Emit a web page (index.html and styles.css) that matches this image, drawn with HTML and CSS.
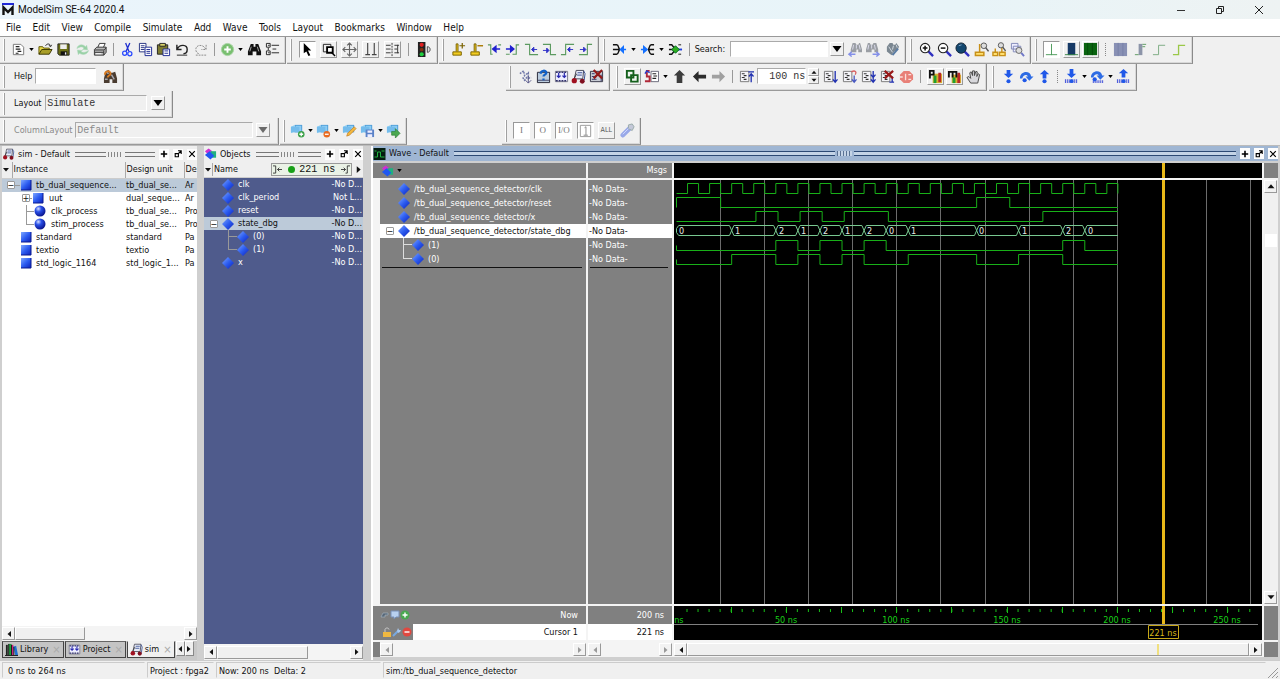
FILE: index.html
```html
<!DOCTYPE html>
<html lang="en">
<head>
<meta charset="utf-8">
<title>ModelSim SE-64 2020.4</title>
<link rel="stylesheet" href="styles.css">
</head>
<body>
<svg class="sprite" aria-hidden="true">
  <defs>
    <linearGradient id="gb" x1="0" y1="0" x2="1" y2="1"><stop offset="0" stop-color="#7fa8ff"/><stop offset=".5" stop-color="#2c5cf0"/><stop offset="1" stop-color="#0c20b8"/></linearGradient>
    <radialGradient id="gc" cx=".35" cy=".3" r=".7"><stop offset="0" stop-color="#d0dcff"/><stop offset=".4" stop-color="#2a50e8"/><stop offset="1" stop-color="#0a1590"/></radialGradient>
  </defs>
  <symbol id="caret" viewBox="0 0 6 4"><path d="M0 0h6L3 4z" fill="#000"/></symbol>
  <symbol id="new" viewBox="0 0 16 16"><path d="M2.500 2.500h8l3 3v8h-11z" fill="#fff" stroke="#777"/><path d="M5 5h4M5 7.500h5M7 10h4M5 12h3" stroke="#222" stroke-width="1.300"/></symbol>
  <symbol id="open" viewBox="0 0 16 16"><path d="M1 13V5h4l1 1.500h6V8" fill="#e6d84a" stroke="#5a5200"/><path d="M1 13l3-5h11l-3 5z" fill="#a89e28" stroke="#3a3500"/><path d="M8 4c2-3 5-2 5 0M11.500 3.500l2 1.500 1-2" fill="none" stroke="#222"/></symbol>
  <symbol id="save" viewBox="0 0 16 16"><path d="M2 2h12v12H3.500L2 12.500z" fill="#6b6f16" stroke="#222"/><path d="M4.500 2.500h7v5h-7z" fill="#eee"/><path d="M5 10h7v4H5z" fill="#111"/><path d="M9.500 11h1.500v2.500H9.500z" fill="#eee"/></symbol>
  <symbol id="refresh" viewBox="0 0 16 16"><path d="M2 7c1-5 7-5 9-2l1.500-1.500 1 5-5.500-.5 1.500-1.500C8 4.500 5 5 2 7zM14.500 9c-1 5-7.500 5-9.500 3l-1.500 1.500-1-5 5.500.5-1.500 1.500c2 1 5 .5 8-1.500z" fill="#98d0a4" stroke="#b4dcc0" stroke-width=".6"/></symbol>
  <symbol id="print" viewBox="0 0 16 16"><path d="M5 6l2-4.500h6L11 6" fill="#fff" stroke="#333"/><path d="M1.500 8L4 5.500h10V11l-2.500 3h-10z" fill="#b8b8b8" stroke="#333"/><path d="M2 8.500h10l2-2.500M2 11h9.500M11.500 9v5" stroke="#333" fill="none"/><path d="M3 12.500h6" stroke="#fff"/></symbol>
  <symbol id="cut" viewBox="0 0 16 16"><path d="M6 1l3.500 9M10.500 1L6.500 10" stroke="#2030d0" stroke-width="1.400"/><circle cx="5" cy="12" r="2.200" fill="none" stroke="#2848ff" stroke-width="1.300"/><circle cx="10.500" cy="12.500" r="2.200" fill="none" stroke="#2848ff" stroke-width="1.300"/></symbol>
  <symbol id="copy" viewBox="0 0 16 16"><path d="M1.500 1.500h7v9h-7z" fill="#fff" stroke="#223080"/><path d="M3 4h4M3 6h4M3 8h4" stroke="#223080"/><path d="M7.500 5.500h7v9h-7z" fill="#fff" stroke="#1a2690"/><path d="M9 8h4M9 10h4M9 12h4" stroke="#1a2690"/></symbol>
  <symbol id="paste" viewBox="0 0 16 16"><path d="M1.500 3h11v10h-11z" fill="#7c7a30" stroke="#222"/><path d="M4 1.500h6v3H4z" fill="#d8d26a" stroke="#222"/><path d="M7.500 7.500h7v7h-7z" fill="#fff" stroke="#1a2690"/><path d="M9 9.500h4M9 12h4" stroke="#1a2690"/></symbol>
  <symbol id="undo" viewBox="0 0 16 16"><path d="M2 3v5h5M2.500 7.500C5 2 13 2.500 13 8c0 3-2 4.500-4 4.500" fill="none" stroke="#222" stroke-width="1.500"/><path d="M2 14h11" stroke="#222"/></symbol>
  <symbol id="redo" viewBox="0 0 16 16"><path d="M14 3v5H9M13.500 7.500C11 2 3 2.500 3 8c0 3 2 4.500 4 4.500" fill="none" stroke="#888" stroke-dasharray="2 1"/><path d="M3 14h11" stroke="#888" stroke-dasharray="2 1"/></symbol>
  <symbol id="add" viewBox="0 0 16 16"><circle cx="8" cy="8" r="6.500" fill="#79bf70" stroke="#a9d4a4"/><path d="M8 4.500v7M4.500 8h7" stroke="#fff" stroke-width="2"/></symbol>
  <symbol id="bino" viewBox="0 0 16 16"><path d="M4 2h3v3h2V2h3l3 8v4h-5v-4H6v4H1v-4z" fill="#111"/><path d="M4.500 5L3 10M11 5l1.500 5" stroke="#aaa"/></symbol>
  <symbol id="tree" viewBox="0 0 16 16"><path d="M1.500 1.500h4v4h-4zM1.500 9.500h4v4h-4z" fill="#fff" stroke="#222"/><path d="M3 3.500h2M3 11.500h2M7 3.500h8M7 11.500h8M8 7.500h4M3.500 6v3" stroke="#222"/></symbol>
  <symbol id="arrow" viewBox="0 0 16 16"><path d="M4 1l8 8H8.500l2.500 5-2 1-2.200-5L4 12z" fill="#000"/></symbol>
  <symbol id="zsel" viewBox="0 0 16 16"><path d="M2.500 2.500h8v8h-8z" fill="none" stroke="#222"/><path d="M6.500 5.500h6v6h-6z" fill="#fff" stroke="#000" stroke-width="2"/><path d="M11 11l4 4" stroke="#000" stroke-width="1.500"/></symbol>
  <symbol id="pan" viewBox="0 0 16 16"><path d="M8 1v14M1 8h14M5.500 3.500L8 1l2.500 2.500M5.500 12.500L8 15l2.500-2.500M3.500 5.500L1 8l2.500 2.500M12.500 5.500L15 8l-2.500 2.500" fill="none" stroke="#666" stroke-width="1.200"/></symbol>
  <symbol id="twoc" viewBox="0 0 16 16"><path d="M5 1v12M12 1v12M2.500 13.500h5M9.500 13.500h5" stroke="#444" stroke-width="1.200"/></symbol>
  <symbol id="edit" viewBox="0 0 16 16"><path d="M1 3.500h5M1 7.500h5M1 11.500h5M10 3.500h5M10 11.500h5M13.500 3v9" stroke="#333"/><path d="M7.500 1v14" stroke="#333" stroke-dasharray="2 1"/><path d="M10 7.500h3" stroke="#333"/></symbol>
  <symbol id="traffic" viewBox="0 0 16 16"><path d="M1 0h8v16H1z" fill="#222"/><circle cx="5" cy="3" r="2.200" fill="#e02020"/><circle cx="5" cy="8" r="2" fill="#803010"/><circle cx="5" cy="13" r="2.200" fill="#20d040"/><path d="M11 5c4 0 4 6 0 6z" fill="#ddd" stroke="#444"/></symbol>
  <symbol id="curadd" viewBox="0 0 16 16"><path d="M2 10.500h9v3.500H2zM5.500 10V2h2v8" fill="#f2cc20" stroke="#7a6200"/><path d="M12 1v6M9 4h6" stroke="#7a6200" stroke-width="1.300"/></symbol>
  <symbol id="curdel" viewBox="0 0 16 16"><path d="M2 10.500h9v3.500H2zM5.500 10V2h2v8" fill="#f2cc20" stroke="#7a6200"/><path d="M9 4h6" stroke="#a87800" stroke-width="1.500"/></symbol>
  <symbol id="prev" viewBox="0 0 16 16"><path d="M1 3h3v10h2M15 3h-3" fill="none" stroke="#5c9a60" stroke-width="1.200"/><path d="M14 7.500H7M9.500 4.500L6 7.500l3.500 3z" fill="#2020d0" stroke="#2020d0" stroke-width="1.500"/></symbol>
  <symbol id="next" viewBox="0 0 16 16"><path d="M15 3h-3v10H8M1 13h4" fill="none" stroke="#5c9a60" stroke-width="1.200"/><path d="M1 7.500h7M6 4.500l3.500 3L6 10.500z" fill="#2020d0" stroke="#2020d0" stroke-width="1.500"/></symbol>
  <symbol id="fall" viewBox="0 0 16 16"><path d="M1 2.500h5v11h9" fill="none" stroke="#5c9a60" stroke-width="1.200"/><path d="M14 8H9M10.500 5.500L8 8l2.500 2.500z" fill="#3030c8" stroke="#3030c8"/></symbol>
  <symbol id="fall2" viewBox="0 0 16 16"><path d="M1 2.500h8v11h6" fill="none" stroke="#5c9a60" stroke-width="1.200"/><path d="M1 9h5M5 6.500L7.500 9 5 11.500z" fill="#3030c8" stroke="#3030c8"/></symbol>
  <symbol id="rise" viewBox="0 0 16 16"><path d="M1 13.500h5v-11h9" fill="none" stroke="#5c9a60" stroke-width="1.200"/><path d="M14 8H9M10.500 5.500L8 8l2.500 2.500z" fill="#3030c8" stroke="#3030c8"/></symbol>
  <symbol id="rise2" viewBox="0 0 16 16"><path d="M1 13.500h9v-11h5" fill="none" stroke="#5c9a60" stroke-width="1.200"/><path d="M2 8h5M6 5.500L8.500 8 6 10.500z" fill="#3030c8" stroke="#3030c8"/></symbol>
  <symbol id="merge" viewBox="0 0 16 16"><path d="M1 3h4c2 0 2 3.500 3 5-1 1.500-1 5-3 5H1M1 8h7" fill="none" stroke="#111" stroke-width="1.600"/><path d="M15 8h-4M12 5L9 8l3 3z" fill="#1470ff" stroke="#1470ff" stroke-width="1.600"/></symbol>
  <symbol id="split" viewBox="0 0 16 16"><path d="M15 3h-3c-2 0-2 3.500-3 5 1 1.500 1 5 3 5h3M15 8H9" fill="none" stroke="#111" stroke-width="1.600"/><path d="M1 8h3M4 5l3.500 3L4 11z" fill="#1470ff" stroke="#1470ff" stroke-width="1.600"/></symbol>
  <symbol id="node" viewBox="0 0 16 16"><path d="M1 3h3l4 5-4 5H1M1 8h6" fill="none" stroke="#111" stroke-width="1.500"/><path d="M9 8h6" stroke="#2040e0" stroke-width="2"/><path d="M8 4l4 4-4 4-4-4z" fill="#30b020" stroke="#062"/><path d="M11 3h3M11 13h3" stroke="#111"/></symbol>
  <symbol id="fprev" viewBox="0 0 16 16"><path d="M6 1h3l1 2h2l1-2h1l2 7v3h-4V8h-2v3H4V8z" fill="#9a9ea4"/><path d="M7 3L6 8M13 3l1 5M10 3v4" stroke="#dde"/><path d="M9 13H2M5 10.500L2 13l3 2.500" fill="none" stroke="#8490e8" stroke-width="1.500"/></symbol>
  <symbol id="fnext" viewBox="0 0 16 16"><path d="M2 1h2l1 2h2l1-2h3l2 7v3H9V8H6v3H0V8z" fill="#9a9ea4"/><path d="M3 3L2 8M9 3l1 5M6 3v4" stroke="#dde"/><path d="M7 13h7M11 10.500l3 2.500-3 2.500" fill="none" stroke="#8490e8" stroke-width="1.500"/></symbol>
  <symbol id="fopt" viewBox="0 0 16 16"><path d="M2 5l3-4h3l1 2h2l1-2 3 4-2 4-3 1-3 4-5-4z" fill="#7b8791"/><path d="M4 5l4 6M9 4l-1 4M12 3l1 3" stroke="#d4dce4"/><path d="M8 14l6-7" stroke="#5a7ca4" stroke-width="2"/></symbol>
  <symbol id="zin" viewBox="0 0 16 16"><path d="M10 10l5 5" stroke="#3030c0" stroke-width="2.500"/><circle cx="6.500" cy="6.500" r="5" fill="#fff" stroke="#222" stroke-width="1.200"/><path d="M6.500 4v5M4 6.500h5" stroke="#111" stroke-width="1.600"/></symbol>
  <symbol id="zout" viewBox="0 0 16 16"><path d="M10 10l5 5" stroke="#3030c0" stroke-width="2.500"/><circle cx="6.500" cy="6.500" r="5" fill="#fff" stroke="#222" stroke-width="1.200"/><path d="M4 6.500h5" stroke="#111" stroke-width="1.600"/></symbol>
  <symbol id="zfull" viewBox="0 0 16 16"><path d="M10 10l5 5" stroke="#3030c0" stroke-width="2.500"/><circle cx="6.500" cy="6.500" r="5.500" fill="#12466e" stroke="#123"/><path d="M4 4l3-1" stroke="#8ac"/></symbol>
  <symbol id="zcur" viewBox="0 0 16 16"><path d="M1.500 11h9v3.500h-9zM6 10.500V2" fill="#ffe070" stroke="#c89018" stroke-width="1.600"/><circle cx="10.500" cy="4" r="3" fill="#ddd" stroke="#555"/><path d="M12.500 6l3 4" stroke="#555" stroke-width="1.500"/></symbol>
  <symbol id="zcur2" viewBox="0 0 16 16"><path d="M1 11h5v3.500H1zM8 11h6v3.500H8zM3.500 10.500V7M10.500 10.500V5" fill="#ffe070" stroke="#c89018" stroke-width="1.500"/><circle cx="9.500" cy="3.500" r="2.800" fill="#ddd" stroke="#555"/><path d="M11.500 5.500l3 4" stroke="#555" stroke-width="1.500"/></symbol>
  <symbol id="zoth" viewBox="0 0 16 16"><path d="M1.500 1.500h7v6h-7zM3.500 4.500h8v6h-8z" fill="#eef" stroke="#8088b8"/><circle cx="9.500" cy="9" r="3.200" fill="#ddd" stroke="#666"/><path d="M12 11.500l3 3.500" stroke="#7078c8" stroke-width="2"/></symbol>
  <symbol id="w1" viewBox="0 0 16 16"><path d="M8 2v12M2 13.500h12" stroke="#4a9a58"/></symbol>
  <symbol id="w2" viewBox="0 0 16 16"><path d="M4 1h8v13H4z" fill="#173a66"/><path d="M1 13.500h14" stroke="#3a8a48"/></symbol>
  <symbol id="w3" viewBox="0 0 16 16"><path d="M1 1h14v13H1z" fill="#0a6410"/><path d="M5 1v13M10 1v13" stroke="#064c0c"/></symbol>
  <symbol id="w4" viewBox="0 0 16 16"><path d="M1 1h14v14H1z" fill="#8890b4"/><path d="M5.500 1v14M10.500 1v14" stroke="#7880a8"/></symbol>
  <symbol id="w5" viewBox="0 0 16 16"><path d="M6 2h4v12H6z" fill="#8c94a8"/><path d="M2 13.500h4M10 2.500h4M10 5h3" stroke="#5c9a60"/></symbol>
  <symbol id="w6" viewBox="0 0 16 16"><path d="M1 13.500h6v-10h7" fill="none" stroke="#7aaa80"/></symbol>
  <symbol id="w7" viewBox="0 0 16 16"><path d="M1 13.500h6v-10h7" fill="none" stroke="#9ac848" stroke-width="1.400"/></symbol>
  <symbol id="hfind" viewBox="0 0 16 16"><path d="M3 2l3-1 2 3h2l3-1 2 7v5h-5v-4H7v4H1v-5z" fill="#4a3c30"/><path d="M3 3l3 2M9 6l3 5M2 11h3" stroke="#a8a8b0" stroke-width="1.500"/><path d="M2 6c0-4 6-5 6-1 0 2-3 2-3 4" fill="none" stroke="#d87a20" stroke-width="2"/></symbol>
  <symbol id="comp" viewBox="0 0 16 16"><path d="M2 5l4-3 1 5 4-3v6l3-1M5 9l2 3 3-4" fill="none" stroke="#7078a8" stroke-width="1.600" stroke-dasharray="2 1"/><path d="M11 7v8M8 12l3 3 3-3" fill="none" stroke="#558"/></symbol>
  <symbol id="qbook" viewBox="0 0 16 16"><path d="M1.500 3.500h13v11h-13z" fill="#bcd" stroke="#223"/><path d="M2 12h12" stroke="#446"/><path d="M5 5c0-4 6-4 6-1 0 2-3 2-3 4M8 10v2" fill="none" stroke="#1060c8" stroke-width="2.400"/></symbol>
  <symbol id="abook" viewBox="0 0 16 16"><path d="M1.500 2.500h13v11h-13z" fill="#eef" stroke="#778"/><path d="M2 3.500h12M2 12.500h12" stroke="#30306a" stroke-width="1.500" stroke-dasharray="2 1"/><path d="M5 4v5M11 4v5M3 7l2 2 2-2M9 7l2 2 2-2" fill="none" stroke="#2828b0" stroke-width="1.300"/></symbol>
  <symbol id="sim" viewBox="0 0 16 16"><path d="M5.500 1.500h8l-1 9h-9z" fill="#e8ecf8" stroke="#445"/><path d="M7 4h5M6.500 6.500h5M13.500 2l1.500 3-1 7" fill="none" stroke="#334a90"/><path d="M3 11L6 5" stroke="#333"/><circle cx="3.500" cy="12.500" r="2.800" fill="#a01020"/><circle cx="12" cy="13" r="2.600" fill="#801020"/></symbol>
  <symbol id="xbook" viewBox="0 0 16 16"><path d="M1.500 2.500h13v11h-13z" fill="#c8ccd4" stroke="#334"/><path d="M3 5h3M3 8h3M3 11h5M13 6v7" stroke="#336"/><path d="M5 1l9 9M14 1l-9 9" stroke="#901818" stroke-width="2.300"/></symbol>
  <symbol id="env" viewBox="0 0 16 16"><path d="M2 2h7v7H2zM6.500 6.500h7v7h-7z" fill="#eef8ee" fill-opacity=".6" stroke="#14601c" stroke-width="2"/></symbol>
  <symbol id="restart" viewBox="0 0 16 16"><path d="M7.500 2.500h8v11h-8z" fill="#fff" stroke="#667"/><path d="M9 5h4M10 7.500h4M9 10h4" stroke="#222" stroke-width="1.200"/><path d="M6 2H3v6h3v5H1" fill="none" stroke="#b02838" stroke-width="2"/><path d="M1 5l2-3 3 2" fill="none" stroke="#2838c8" stroke-width="1.500"/></symbol>
  <symbol id="up" viewBox="0 0 16 16"><path d="M8 1l6 6h-3v8H5V7H2z" fill="#3c3c3c"/></symbol>
  <symbol id="left" viewBox="0 0 16 16"><path d="M1 8l6-6v4h8v4H7v4z" fill="#2c2c2c"/></symbol>
  <symbol id="right" viewBox="0 0 16 16"><path d="M15 8L9 2v4H1v4h8v4z" fill="#a0a0a0"/></symbol>
  <symbol id="doc" viewBox="0 0 16 16"><path d="M1.500 2.500h9v11h-9z" fill="#f4f4f8" stroke="#777"/><path d="M3 5h3M5 7h3M3 9h3M5 11h3" stroke="#333" stroke-width="1.200"/></symbol>
  <symbol id="runup" viewBox="0 0 16 16"><use href="#doc"/><path d="M10 3h6M13 14V5M10.500 8L13 5l2.500 3" fill="none" stroke="#2030b0" stroke-width="1.400"/></symbol>
  <symbol id="run" viewBox="0 0 16 16"><use href="#doc"/><path d="M13 2v12M10.500 11l2.500 3 2.500-3" fill="none" stroke="#2030b0" stroke-width="1.400"/></symbol>
  <symbol id="runc" viewBox="0 0 16 16"><use href="#doc"/><path d="M13 7v7M10.500 11l2.500 3 2.500-3" fill="none" stroke="#4858c0" stroke-width="1.400"/><path d="M10 3c4-2 6 0 4 3" fill="none" stroke="#d86060" stroke-width="1.400"/></symbol>
  <symbol id="runa" viewBox="0 0 16 16"><use href="#doc"/><path d="M13 2v12M10.500 6l2.500 3 2.500-3M10.500 11l2.500 3 2.500-3" fill="none" stroke="#2030b0" stroke-width="1.400"/></symbol>
  <symbol id="brk" viewBox="0 0 16 16"><use href="#doc"/><path d="M13 8v6M10 14h5" stroke="#2030b0" stroke-width="1.400"/><path d="M5 2l9 8M14 2l-9 8" stroke="#981818" stroke-width="2.400"/></symbol>
  <symbol id="stop" viewBox="0 0 16 16"><path d="M5 2h6l4 4v5l-4 4H5l-4-4V6z" fill="#e88078"/><path d="M1 8.500h3M7 5v7M10 6h3M10 11h3" stroke="#fbe0dc" stroke-width="1.400"/></symbol>
  <symbol id="prof" viewBox="0 0 16 16"><path d="M5 5h10v10H5z" fill="#d8b030"/><path d="M6 7h3v8H6z" fill="#20a030"/><path d="M11 4h3v10h-3z" fill="#b82828"/><path d="M2 10V2h4v4H2" fill="none" stroke="#111" stroke-width="2"/></symbol>
  <symbol id="mem" viewBox="0 0 16 16"><path d="M5 6h10v9H5z" fill="#d8b030"/><path d="M6 9h3v6H6z" fill="#20a030"/><path d="M11 4h3v11h-3z" fill="#b82828"/><path d="M2 9V3h8v6M6 3v6" fill="none" stroke="#111" stroke-width="2"/></symbol>
  <symbol id="hand" viewBox="0 0 16 16"><path d="M5 15L1 9l2-1 2 2L4 4l1.500-1L7 7V2h2v5l1.500-4.500L12 3l-.5 5L13 5l1.500 1-2 9z" fill="#d8d8dc" stroke="#444"/></symbol>
  <symbol id="sinto" viewBox="0 0 16 16"><path d="M6 1h4v4h3L8 9.500 3 5h3z" fill="#2058e8"/><circle cx="8" cy="13" r="2.200" fill="#2058e8"/></symbol>
  <symbol id="sover" viewBox="0 0 16 16"><path d="M1 10c0-8 11-9 12-2h2.500L11 12.500 7 8h2.500C8 5.500 5 6 3.500 10z" fill="#2e6ce4"/><circle cx="6" cy="12" r="2.200" fill="#2058e8"/></symbol>
  <symbol id="sout" viewBox="0 0 16 16"><path d="M8 1l5 4.500h-3V10H6V5.500H3z" fill="#2058e8"/><circle cx="8" cy="13" r="2.200" fill="#2058e8"/></symbol>
  <symbol id="sinto2" viewBox="0 0 16 16"><path d="M6 0h4v5h3L8 9.500 3 5h3z" fill="#2058e8"/><path d="M1 13h14" stroke="#3848d8" stroke-width="4" stroke-dasharray="1 1"/><circle cx="8" cy="13" r="2" fill="#2058e8"/></symbol>
  <symbol id="sover2" viewBox="0 0 16 16"><path d="M1 9c0-8 11-9 12-2h2.500L11 11.500 7 7h2.500C8 4.500 5 5 3.500 9z" fill="#2e6ce4"/><path d="M3 13.500h12" stroke="#3848d8" stroke-width="3" stroke-dasharray="1 1"/><circle cx="5" cy="11" r="2.200" fill="#2058e8"/></symbol>
  <symbol id="sout2" viewBox="0 0 16 16"><path d="M8 0l5 4.500h-3V9H6V4.500H3z" fill="#2058e8"/><path d="M1 13h14" stroke="#3848d8" stroke-width="4" stroke-dasharray="1 1"/><circle cx="8" cy="13" r="2" fill="#2058e8"/></symbol>
  <symbol id="tag" viewBox="0 0 16 16"><path d="M5 2h8v8H5z" fill="#4f9cd8"/><path d="M1 4l4-2v7l-4 2zM6 3h6v6H6z" fill="#8ccdf4"/><path d="M1 4h9v6H1z" fill="#74bcec"/></symbol>
  <symbol id="tagadd" viewBox="0 0 16 16"><use href="#tag"/><circle cx="12" cy="12" r="3.500" fill="#3aa048"/><path d="M12 10v4M10 12h4" stroke="#fff" stroke-width="1.400"/></symbol>
  <symbol id="tagdel" viewBox="0 0 16 16"><use href="#tag"/><circle cx="11.500" cy="12" r="3.500" fill="#e86a20"/><path d="M9.500 12h4" stroke="#fff" stroke-width="1.400"/></symbol>
  <symbol id="tagedit" viewBox="0 0 16 16"><use href="#tag"/><path d="M5 14l1-3 7-7 2 2-7 7z" fill="#f2b840" stroke="#c07a20" stroke-width=".7"/></symbol>
  <symbol id="tagsave" viewBox="0 0 16 16"><use href="#tag"/><path d="M6 7h9v8H6z" fill="#5a82c8"/><path d="M8 8h5v2.500H8zM8 12h5v3H8z" fill="#eef"/></symbol>
  <symbol id="taggo" viewBox="0 0 16 16"><use href="#tag"/><path d="M6 9h4V6l5 5-5 5v-3H6z" fill="#4aa850" stroke="#2a7a34" stroke-width=".7"/></symbol>
  <symbol id="fbox" viewBox="0 0 16 16"><path d="M2.500 2.500h11v12h-11z" fill="none" stroke="#999"/><path d="M7 5l1.500-1v9M6 13h4.500" fill="none" stroke="#888"/></symbol>
  <symbol id="wrench" viewBox="0 0 16 16"><path d="M3 13l8-8" stroke="#98a8e8" stroke-width="5" stroke-linecap="round"/><path d="M9 2l4-1 2 3-2 4-4-2z" fill="#c4c8d8" stroke="#9aa"/><path d="M3 12l6-6" stroke="#d4dcff"/></symbol>
  <symbol id="sq" viewBox="0 0 12 12"><path d="M1 1h10v10H1z" fill="url(#gb)"/><path d="M11 1v10H1" fill="none" stroke="#0a1a90"/></symbol>
  <symbol id="ball" viewBox="0 0 12 12"><circle cx="6" cy="6" r="5.500" fill="url(#gc)"/></symbol>
  <symbol id="dia" viewBox="0 0 12 12"><path d="M6 0l6 6-6 6-6-6z" fill="url(#gb)"/></symbol>
  <symbol id="objs" viewBox="0 0 14 12"><path d="M5 0l4 3-4 4-4-4z" fill="#d030d0"/><path d="M7 3h6v7H7z" fill="#20b080"/><path d="M6 3l5 5-4 4-6-5z" fill="#2058f0"/></symbol>
  <symbol id="wav" viewBox="0 0 12 12"><path d="M0 0h12v12H0z" fill="#041c10"/><path d="M1 9h3V4h3v5h4M1 3h2M8 3h3" fill="none" stroke="#20b040"/></symbol>
  <symbol id="lib" viewBox="0 0 14 14"><path d="M1 2h2v11H1z" fill="#222"/><path d="M4 1h3v12H4z" fill="#20a040"/><path d="M7 2h2v11H7z" fill="#d02080"/><path d="M9 4l3-1 2 10h-3z" fill="#2070d0"/><path d="M0 13.500h14M4 1v12M7 2v11M9.500 4v9" stroke="#111"/></symbol>
  <symbol id="float" viewBox="0 0 10 10"><path d="M1.500 4.500h4v4h-4z" fill="none" stroke="#000" stroke-width="1.400"/><path d="M5 1h4v4M8.500 1.500L5 5" fill="none" stroke="#000" stroke-width="1.400"/></symbol>
  <symbol id="plus" viewBox="0 0 10 10"><path d="M5 1v8M1 5h8" stroke="#000" stroke-width="2"/></symbol>
  <symbol id="close" viewBox="0 0 10 10"><path d="M1.500 1.500l7 7M8.500 1.500l-7 7" stroke="#000" stroke-width="1.500"/></symbol>
  <symbol id="al" viewBox="0 0 6 8"><path d="M5 1v6L1.500 4z" fill="currentColor"/></symbol>
  <symbol id="ar" viewBox="0 0 6 8"><path d="M1 1v6l3.500-3z" fill="currentColor"/></symbol>
  <symbol id="au" viewBox="0 0 8 6"><path d="M1 4.500h6L4 1z" fill="currentColor"/></symbol>
  <symbol id="ad" viewBox="0 0 8 6"><path d="M1 1h6L4 4.500z" fill="currentColor"/></symbol>
</svg>

<header class="titlebar">
  <svg class="logo" viewBox="0 0 12 13"><path d="M0 0h12v2H0z" fill="#2028d8"/><path d="M1.500 12V4.500L6 9l4.500-4.500V12" fill="none" stroke="#111" stroke-width="2.400"/></svg>
  <h1>ModelSim SE-64 2020.4</h1>
  <button class="win" aria-label="Minimize"><svg viewBox="0 0 10 10"><path d="M1 5.500h8" stroke="#333"/></svg></button>
  <button class="win" aria-label="Restore"><svg viewBox="0 0 10 10"><path d="M1.500 3.500h5v5h-5zM3.500 3V1.500h5v5H7" fill="none" stroke="#222"/></svg></button>
  <button class="win" aria-label="Close"><svg viewBox="0 0 10 10"><path d="M1 1l8 8M9 1L1 9" stroke="#222"/></svg></button>
</header>
<nav class="menu">
  <button>File</button><button>Edit</button><button>View</button><button>Compile</button><button>Simulate</button><button>Add</button><button>Wave</button><button>Tools</button><button>Layout</button><button>Bookmarks</button><button>Window</button><button>Help</button>
</nav>

<section class="bars">
  <div class="bar">
    <div class="grp g-file">
      <button class="b" aria-label="New"><svg><use href="#new"/></svg></button><button class="c" aria-label="New menu"><svg><use href="#caret"/></svg></button>
      <button class="b" aria-label="Open"><svg><use href="#open"/></svg></button>
      <button class="b" aria-label="Save"><svg><use href="#save"/></svg></button>
      <button class="b" aria-label="Reload"><svg><use href="#refresh"/></svg></button>
      <button class="b" aria-label="Print"><svg><use href="#print"/></svg></button><i class="sep"></i>
      <button class="b" aria-label="Cut"><svg><use href="#cut"/></svg></button>
      <button class="b" aria-label="Copy"><svg><use href="#copy"/></svg></button>
      <button class="b" aria-label="Paste"><svg><use href="#paste"/></svg></button>
      <button class="b" aria-label="Undo"><svg><use href="#undo"/></svg></button>
      <button class="b" aria-label="Redo"><svg><use href="#redo"/></svg></button><i class="sep"></i>
      <button class="b" aria-label="Add"><svg><use href="#add"/></svg></button><button class="c" aria-label="Add menu"><svg><use href="#caret"/></svg></button>
      <button class="b" aria-label="Find"><svg><use href="#bino"/></svg></button>
      <button class="b" aria-label="Collapse"><svg><use href="#tree"/></svg></button>
    </div>
    <div class="grp g-mode">
      <button class="b on" aria-label="Select mode"><svg><use href="#arrow"/></svg></button>
      <button class="b up" aria-label="Zoom mode"><svg><use href="#zsel"/></svg></button>
      <button class="b up" aria-label="Pan mode"><svg><use href="#pan"/></svg></button>
      <button class="b up" aria-label="Two cursor mode"><svg><use href="#twoc"/></svg></button>
      <button class="b up" aria-label="Edit mode"><svg><use href="#edit"/></svg></button><i class="sep"></i>
      <button class="b" aria-label="Stop drawing"><svg><use href="#traffic"/></svg></button>
    </div>
    <div class="grp g-cursor">
      <button class="b" aria-label="Insert cursor"><svg><use href="#curadd"/></svg></button>
      <button class="b" aria-label="Delete cursor"><svg><use href="#curdel"/></svg></button>
      <button class="b" aria-label="Previous transition"><svg><use href="#prev"/></svg></button>
      <button class="b" aria-label="Next transition"><svg><use href="#next"/></svg></button>
      <button class="b" aria-label="Previous falling edge"><svg><use href="#fall"/></svg></button>
      <button class="b" aria-label="Next falling edge"><svg><use href="#fall2"/></svg></button>
      <button class="b" aria-label="Previous rising edge"><svg><use href="#rise"/></svg></button>
      <button class="b" aria-label="Next rising edge"><svg><use href="#rise2"/></svg></button>
    </div>
    <div class="grp g-search">
      <button class="b" aria-label="Drivers"><svg><use href="#merge"/></svg></button><button class="c" aria-label="Drivers menu"><svg><use href="#caret"/></svg></button>
      <button class="b" aria-label="Readers"><svg><use href="#split"/></svg></button><button class="c" aria-label="Readers menu"><svg><use href="#caret"/></svg></button>
      <button class="b" aria-label="Net"><svg><use href="#node"/></svg></button><i class="sep"></i>
      <label for="search">Search:</label><input id="search" class="field" type="text"><button class="drop" aria-label="Search history"><svg><use href="#caret"/></svg></button>
      <button class="b" aria-label="Search reverse"><svg><use href="#fprev"/></svg></button>
      <button class="b" aria-label="Search forward"><svg><use href="#fnext"/></svg></button>
      <button class="b" aria-label="Search options"><svg><use href="#fopt"/></svg></button>
    </div>
    <div class="grp g-zoom">
      <button class="b" aria-label="Zoom in"><svg><use href="#zin"/></svg></button>
      <button class="b" aria-label="Zoom out"><svg><use href="#zout"/></svg></button>
      <button class="b" aria-label="Zoom full"><svg><use href="#zfull"/></svg></button>
      <button class="b" aria-label="Zoom on cursor"><svg><use href="#zcur"/></svg></button>
      <button class="b" aria-label="Zoom between cursors"><svg><use href="#zcur2"/></svg></button>
      <button class="b" aria-label="Zoom other window"><svg><use href="#zoth"/></svg></button>
    </div>
    <div class="grp g-expand">
      <button class="b on" aria-label="Expanded time off"><svg><use href="#w1"/></svg></button>
      <button class="b up" aria-label="Expanded time deltas"><svg><use href="#w2"/></svg></button>
      <button class="b up" aria-label="Expanded time events"><svg><use href="#w3"/></svg></button><i class="sep dot"></i>
      <button class="b" aria-label="Expand all time"><svg><use href="#w4"/></svg></button>
      <button class="b" aria-label="Expand at cursor"><svg><use href="#w5"/></svg></button>
      <button class="b" aria-label="Collapse all time"><svg><use href="#w6"/></svg></button>
      <button class="b" aria-label="Collapse at cursor"><svg><use href="#w7"/></svg></button>
    </div>
  </div>
  <div class="bar">
    <div class="grp g-help">
      <label for="help">Help</label><input id="help" class="field" type="text">
      <button class="b" aria-label="Search help"><svg><use href="#hfind"/></svg></button>
    </div>
    <div class="grp g-compile">
      <button class="b" aria-label="Compile"><svg><use href="#comp"/></svg></button>
      <button class="b" aria-label="Compile out of date"><svg><use href="#qbook"/></svg></button>
      <button class="b" aria-label="Compile all"><svg><use href="#abook"/></svg></button>
      <button class="b" aria-label="Simulate"><svg><use href="#sim"/></svg></button>
      <button class="b" aria-label="Break compile"><svg><use href="#xbook"/></svg></button>
    </div>
    <div class="grp g-run">
      <button class="b up" aria-label="Environment"><svg><use href="#env"/></svg></button>
      <button class="b" aria-label="Context"><svg><use href="#restart"/></svg></button><button class="c" aria-label="Context menu"><svg><use href="#caret"/></svg></button>
      <button class="b" aria-label="Up"><svg><use href="#up"/></svg></button>
      <button class="b" aria-label="Back"><svg><use href="#left"/></svg></button>
      <button class="b" aria-label="Forward"><svg><use href="#right"/></svg></button><i class="sep"></i>
      <button class="b" aria-label="Restart"><svg><use href="#runup"/></svg></button>
      <input class="field num" type="text" value="100 ns" aria-label="Run length"><span class="spin"><button aria-label="Increase"><svg><use href="#au"/></svg></button><button aria-label="Decrease"><svg><use href="#ad"/></svg></button></span>
      <button class="b" aria-label="Run"><svg><use href="#run"/></svg></button>
      <button class="b" aria-label="Continue"><svg><use href="#runc"/></svg></button>
      <button class="b" aria-label="Run all"><svg><use href="#runa"/></svg></button>
      <button class="b" aria-label="Break"><svg><use href="#brk"/></svg></button>
      <button class="b" aria-label="Stop"><svg><use href="#stop"/></svg></button><i class="sep"></i>
      <button class="b up" aria-label="Performance profiling"><svg><use href="#prof"/></svg></button>
      <button class="b up" aria-label="Memory profiling"><svg><use href="#mem"/></svg></button>
      <button class="b" aria-label="Hold"><svg><use href="#hand"/></svg></button>
    </div>
    <div class="grp g-step">
      <button class="b" aria-label="Step into"><svg><use href="#sinto"/></svg></button>
      <button class="b" aria-label="Step over"><svg><use href="#sover"/></svg></button>
      <button class="b" aria-label="Step out"><svg><use href="#sout"/></svg></button><i class="sep dot"></i>
      <button class="b" aria-label="Step into instance"><svg><use href="#sinto2"/></svg></button><button class="c" aria-label="Step into menu"><svg><use href="#caret"/></svg></button>
      <button class="b" aria-label="Step over instance"><svg><use href="#sover2"/></svg></button><button class="c" aria-label="Step over menu"><svg><use href="#caret"/></svg></button>
      <button class="b" aria-label="Step out instance"><svg><use href="#sout2"/></svg></button>
    </div>
  </div>
  <div class="bar">
    <div class="grp g-layout">
      <label for="layout">Layout</label><select id="layout" class="combo"><option>Simulate</option></select><button class="drop" aria-label="Choose layout"><svg><use href="#caret"/></svg></button>
    </div>
  </div>
  <div class="bar">
    <div class="grp g-cols off">
      <label for="cols">ColumnLayout</label><select id="cols" class="combo" disabled><option>Default</option></select><button class="drop" disabled aria-label="Choose column layout"><svg><use href="#caret"/></svg></button>
    </div>
    <div class="grp g-marks">
      <button class="b" aria-label="Add bookmark"><svg><use href="#tagadd"/></svg></button><button class="c" aria-label="Add bookmark menu"><svg><use href="#caret"/></svg></button>
      <button class="b" aria-label="Delete bookmark"><svg><use href="#tagdel"/></svg></button><button class="c" aria-label="Delete bookmark menu"><svg><use href="#caret"/></svg></button>
      <button class="b" aria-label="Manage bookmarks"><svg><use href="#tagedit"/></svg></button>
      <button class="b" aria-label="Save bookmarks"><svg><use href="#tagsave"/></svg></button><button class="c" aria-label="Save bookmarks menu"><svg><use href="#caret"/></svg></button>
      <button class="b" aria-label="Jump to bookmark"><svg><use href="#taggo"/></svg></button>
    </div>
    <div class="grp g-filter">
      <button class="b on t">I</button><button class="b on t">O</button><button class="b on t">I/O</button>
      <button class="b on" aria-label="Internal"><svg><use href="#fbox"/></svg></button><button class="b up t all">ALL</button>
      <button class="b" aria-label="Filter options"><svg><use href="#wrench"/></svg></button>
    </div>
  </div>
</section>

<main class="panes">
  <section class="pane sim">
    <div class="head"><svg class="ic"><use href="#sim"/></svg><h2>sim - Default</h2><i class="rule"></i><i class="grip"></i><i class="rule"></i><button aria-label="Zoom pane"><svg><use href="#plus"/></svg></button><button aria-label="Undock"><svg><use href="#float"/></svg></button><button aria-label="Close pane"><svg><use href="#close"/></svg></button></div>
    <div class="list">
      <table>
        <thead><tr><th class="k"><svg class="dn"><use href="#ad"/></svg></th><th>Instance</th><th class="du">Design unit</th><th class="de">De</th></tr></thead>
        <tbody>
          <tr class="sel"><td colspan="2"><div class="n l0"><button class="tw" aria-label="Collapse">−</button><i class="dash"></i><svg><use href="#sq"/></svg><span>tb_dual_sequence...</span></div></td><td>tb_dual_se...</td><td>Ar</td></tr>
          <tr><td colspan="2"><div class="n l1"><button class="tw" aria-label="Expand">+</button><i class="dash"></i><svg><use href="#sq"/></svg><span>uut</span></div></td><td>dual_seque...</td><td>Ar</td></tr>
          <tr><td colspan="2"><div class="n l1 leaf"><i class="elbow"></i><svg><use href="#ball"/></svg><span>clk_process</span></div></td><td>tb_dual_se...</td><td>Pro</td></tr>
          <tr><td colspan="2"><div class="n l1 leaf"><i class="elbow end"></i><svg><use href="#ball"/></svg><span>stim_process</span></div></td><td>tb_dual_se...</td><td>Pro</td></tr>
          <tr><td colspan="2"><div class="n top"><svg><use href="#sq"/></svg><span>standard</span></div></td><td>standard</td><td>Pa</td></tr>
          <tr><td colspan="2"><div class="n top"><svg><use href="#sq"/></svg><span>textio</span></div></td><td>textio</td><td>Pa</td></tr>
          <tr><td colspan="2"><div class="n top"><svg><use href="#sq"/></svg><span>std_logic_1164</span></div></td><td>std_logic_1...</td><td>Pa</td></tr>
        </tbody>
      </table>
    </div>
    <div class="hs"><button aria-label="Scroll left"><svg><use href="#al"/></svg></button><i class="thumb short"></i><i class="track"></i><button aria-label="Scroll right"><svg><use href="#ar"/></svg></button></div>
    <div class="tabs"><button class="tab"><svg><use href="#lib"/></svg>Library<b>×</b></button><button class="tab"><svg><use href="#abook"/></svg>Project<b>×</b></button><button class="tab cur"><svg><use href="#sim"/></svg>sim<b>×</b></button><button class="arr" aria-label="Previous tab"><svg><use href="#al"/></svg></button><button class="arr" aria-label="Next tab"><svg><use href="#ar"/></svg></button></div>
  </section>

  <section class="pane obj">
    <div class="head"><svg class="ic"><use href="#objs"/></svg><h2>Objects</h2><i class="rule"></i><i class="grip"></i><i class="rule"></i><button aria-label="Zoom pane"><svg><use href="#plus"/></svg></button><button aria-label="Undock"><svg><use href="#float"/></svg></button><button aria-label="Close pane"><svg><use href="#close"/></svg></button></div>
    <div class="list">
      <div class="cols"><svg class="dn"><use href="#ad"/></svg><span class="nm">Name</span><span class="now"><svg viewBox="0 0 12 10"><path d="M1 1h3v8H1M11 5H6M8 3L6 5l2 2" fill="none" stroke="#333"/></svg><i></i><span>221 ns</span><svg viewBox="0 0 12 10"><path d="M11 1H8v8H6M1 5h5M4 3l2 2-2 2" fill="none" stroke="#333"/></svg></span><svg class="more"><use href="#ar"/></svg></div>
      <table>
        <tbody>
          <tr><td><div class="n o"><svg><use href="#dia"/></svg><span>clk</span></div></td><td>-No D...</td></tr>
          <tr><td><div class="n o"><svg><use href="#dia"/></svg><span>clk_period</span></div></td><td>Not L...</td></tr>
          <tr><td><div class="n o"><svg><use href="#dia"/></svg><span>reset</span></div></td><td>-No D...</td></tr>
          <tr class="sel"><td><div class="n o1"><button class="tw" aria-label="Collapse">−</button><svg><use href="#dia"/></svg><span>state_dbg</span></div></td><td>-No D...</td></tr>
          <tr><td><div class="n o2"><i class="elbow"></i><svg><use href="#dia"/></svg><span>(0)</span></div></td><td>-No D...</td></tr>
          <tr><td><div class="n o2"><i class="elbow end"></i><svg><use href="#dia"/></svg><span>(1)</span></div></td><td>-No D...</td></tr>
          <tr><td><div class="n o"><svg><use href="#dia"/></svg><span>x</span></div></td><td>-No D...</td></tr>
        </tbody>
      </table>
    </div>
    <div class="hs"><button aria-label="Scroll left"><svg><use href="#al"/></svg></button><i class="thumb mid"></i><i class="track"></i><button aria-label="Scroll right"><svg><use href="#ar"/></svg></button></div>
  </section>

  <section class="pane wave">
    <div class="head"><svg class="ic"><use href="#wav"/></svg><h2>Wave - Default</h2><i class="rule"></i><i class="grip"></i><i class="rule"></i><button aria-label="Zoom pane"><svg><use href="#plus"/></svg></button><button aria-label="Undock"><svg><use href="#float"/></svg></button><button aria-label="Close pane"><svg><use href="#close"/></svg></button></div>
    <div class="wgrid">
      <div class="g tool"><svg class="ic"><use href="#objs"/></svg><svg class="cr"><use href="#caret"/></svg></div>
      <div class="g msgs">Msgs</div>
      <div class="blk"><svg class="plot"><path d="M489.500 0v20" stroke="#e8b818" stroke-width="3"/></svg></div>
      <div class="g"></div>

      <ul class="names">
        <li><svg><use href="#dia"/></svg>/tb_dual_sequence_detector/clk</li>
        <li><svg><use href="#dia"/></svg>/tb_dual_sequence_detector/reset</li>
        <li><svg><use href="#dia"/></svg>/tb_dual_sequence_detector/x</li>
        <li class="sel"><button class="tw" aria-label="Collapse">−</button><svg><use href="#dia"/></svg>/tb_dual_sequence_detector/state_dbg</li>
        <li class="sub"><i class="elbow"></i><svg><use href="#dia"/></svg>(1)</li>
        <li class="sub"><i class="elbow end"></i><svg><use href="#dia"/></svg>(0)</li>
        <li class="endline"></li>
      </ul>
      <ul class="vals">
        <li>-No Data-</li><li>-No Data-</li><li>-No Data-</li><li class="sel">-No Data-</li><li>-No Data-</li><li>-No Data-</li><li class="endline"></li>
      </ul>
      <div class="blk">
        <svg class="plot" role="img" aria-label="Waveforms">
          <path class="gridl" d="M46.500 0v999M90.500 0v999M134.500 0v999M178.500 0v999M222.500 0v999M266.500 0v999M311.500 0v999M355.500 0v999M399.500 0v999M443.500 0v999M532.500 0v999M576.500 0v999"/>
          <g class="sig" transform="translate(2.500 0.500) scale(2.207 1)">
            <path d="M0 13h5v-10h5v10h5v-10h5v10h5v-10h5v10h5v-10h5v10h5v-10h5v10h5v-10h5v10h5v-10h5v10h5v-10h5v10h5v-10h5v10h5v-10h5v10h5v-10h5v10h5v-10h5v10h5v-10h5v10h5v-10h5v10h5v-10h5v10h5v-10h5v10h5v-10h5v10h5v-10h5v10h5v-10h5v10h5v-10h5v10"/>
            <path d="M0 27V17H20V27H136V17H151V27H200"/>
            <path d="M0 41H36V31H46V41H56V31H66V41H76V31H96V41H166V31H200"/>
            <path d="M0 65V70H45V60H55V70H65V60H75V70H85V60H95V70H175V60H185V70H200"/>
            <path d="M0 79V84H25V74H45V84H55V74H65V84H75V74H85V84H105V74H136V84H155V74H175V84H200"/>
            <path class="bus" d="M1 45H24M26 45H44M46 45H54M56 45H64M66 45H74M76 45H84M86 45H94M96 45H104M106 45H135M137 45H154M156 45H174M176 45H184M186 45H200M1 55H24M26 55H44M46 55H54M56 55H64M66 55H74M76 55H84M86 55H94M96 55H104M106 55H135M137 55H154M156 55H174M176 55H184M186 55H200M1 45L0 48V52L1 55M24 45l2 10M26 45l-2 10M44 45l2 10M46 45l-2 10M54 45l2 10M56 45l-2 10M64 45l2 10M66 45l-2 10M74 45l2 10M76 45l-2 10M84 45l2 10M86 45l-2 10M94 45l2 10M96 45l-2 10M104 45l2 10M106 45l-2 10M135 45l2 10M137 45l-2 10M154 45l2 10M156 45l-2 10M174 45l2 10M176 45l-2 10M184 45l2 10M186 45l-2 10"/>
          </g>
          <g class="val"><text x="5" y="54">0</text><text x="61" y="54">1</text><text x="105" y="54">2</text><text x="127" y="54">1</text><text x="149" y="54">2</text><text x="171" y="54">1</text><text x="193" y="54">2</text><text x="215" y="54">0</text><text x="237" y="54">1</text><text x="305" y="54">0</text><text x="348" y="54">1</text><text x="392" y="54">2</text><text x="414" y="54">0</text></g>
          <path d="M489.500 0v999" stroke="#e8b818" stroke-width="3"/>
        </svg>
      </div>
      <div class="vs"><button aria-label="Scroll up"><svg><use href="#au"/></svg></button><i class="thumb"></i><button aria-label="Scroll down"><svg><use href="#ad"/></svg></button></div>

      <div class="foot">
        <div class="now"><svg viewBox="0 0 10 10"><path d="M1 7l2-4h5v2H5v2z" fill="#596878" stroke="#a8b8c8" stroke-width=".6"/></svg><svg viewBox="0 0 10 10"><path d="M1 1h8v6H6L4 9V7H1z" fill="#b8d0f0" stroke="#7890b8"/></svg><svg viewBox="0 0 10 10"><circle cx="5" cy="5" r="4.500" fill="#4aa850"/><path d="M5 2.500v5M2.500 5h5" stroke="#fff" stroke-width="1.400"/></svg><span>Now</span></div>
        <div class="cur"><span class="tools"><svg viewBox="0 0 10 10"><path d="M3 5V2.500c0-2 4-2 4 0" fill="none" stroke="#ccc"/><path d="M1 5h8v5H1z" fill="#f0b840"/></svg><svg viewBox="0 0 10 10"><path d="M1 9l5-5" stroke="#78a8e0" stroke-width="2"/><path d="M5 4l1-3 1 2 2 0-1 2-2 1z" fill="#a8c8f0"/></svg><svg viewBox="0 0 10 10"><circle cx="5" cy="5" r="4.500" fill="#e04840"/><path d="M2.500 5h5" stroke="#fff" stroke-width="1.400"/></svg></span><span>Cursor 1</span></div>
      </div>
      <div class="foot"><div class="now"><span>200 ns</span></div><div class="cur"><span>221 ns</span></div></div>
      <div class="blk">
        <svg class="plot time" role="img" aria-label="Time axis">
          <path d="M12.500 4.500H586" stroke-width="3" stroke-dasharray="1 10.035"/>
          <path d="M57.500 1v6M112.500 1v6M167.500 1v6M222.500 1v6M277.500 1v6M333.500 1v6M388.500 1v6M443.500 1v6M498.500 1v6M553.500 1v6"/>
          <path d="M0 18.500h584" stroke="#808080"/>
          <g><text x="1" y="17">0 ns</text><text x="112" y="17">50 ns</text><text x="222" y="17">100 ns</text><text x="333" y="17">150 ns</text><text x="443" y="17">200 ns</text><text x="553" y="17">250 ns</text></g>
          <path d="M489.500 0v18" stroke="#e8b818" stroke-width="3"/>
          <path d="M474.500 19.500h30v13h-30z" stroke="#c8a818" fill="#000"/><text class="ct" x="489" y="30">221 ns</text>
        </svg>
      </div>
      <div class="g"></div>

      <div class="hs dim"><button aria-label="Scroll left"><svg><use href="#al"/></svg></button><i class="track"></i><button aria-label="Scroll right"><svg><use href="#ar"/></svg></button></div>
      <div class="hs dim"><button aria-label="Scroll left"><svg><use href="#al"/></svg></button><i class="track"></i><button aria-label="Scroll right"><svg><use href="#ar"/></svg></button></div>
      <div class="hs"><button aria-label="Scroll left"><svg><use href="#al"/></svg></button><i class="thumb full"><em></em></i><button aria-label="Scroll right"><svg><use href="#ar"/></svg></button></div>
      <div class="g"></div>
    </div>
  </section>
</main>

<footer class="status"><span class="s1">0 ns to 264 ns</span><span class="s2">Project : fpga2</span><span class="s3">Now: 200 ns&nbsp; Delta: 2</span><span class="s4">sim:/tb_dual_sequence_detector</span><svg viewBox="0 0 10 10"><path d="M0 10L10 0M4 10l6-6M8 10l2-2" stroke="#999"/></svg></footer>
</body>
</html>
```
FILE: styles.css
```css
* { box-sizing: border-box; }
html, body { height: 100%; margin: 0; }
body { display: flex; flex-direction: column; overflow: hidden; background: #f0f0f0; color: #111; font: 9px/13px "DejaVu Sans Condensed", "DejaVu Sans", sans-serif; }
button, input, select { font: inherit; color: inherit; margin: 0; padding: 0; border: 0; background: none; border-radius: 0; }
button { display: flex; align-items: center; justify-content: center; white-space: nowrap; }
h1, h2, ul { margin: 0; padding: 0; font: inherit; list-style: none; }
svg { display: block; flex: none; }
i { font-style: normal; }
.sprite { position: absolute; width: 0; height: 0; }

.titlebar { display: flex; align-items: center; height: 19px; background: linear-gradient(90deg, #eaf4fb, #e8f4f8 75%, #eef3f3); }
.logo { width: 12px; height: 13px; margin: 0 4px 0 2px; }
.titlebar h1 { flex: 1; font: 10px/18px Roboto, sans-serif; }
.win { width: 39px; height: 19px; }
.win svg { width: 10px; height: 10px; }
.titlebar .win:last-child { margin-right: 2px; }
.menu { background: #fff; display: flex; justify-content: space-between; height: 17px; padding-left: 6px; padding-right: calc(100% - 464px); font-size: 10px; }

.bars { border-top: 1px solid #999; }
.bar { display: flex; height: 27px; }
.grp { display: flex; align-items: center; justify-content: space-between; height: 27px; margin-right: 1px; padding: 0 4px 2px 11px; border-right: 1px solid #8a8a8a; border-bottom: 1px solid #9a9a9a; background: linear-gradient(#a0a0a0, #a0a0a0) 4px 2px / 1px 22px no-repeat, linear-gradient(#fff, #fff) 3px 2px / 1px 22px no-repeat; box-shadow: inset -1px -1px #d8d8d8; }
.b { width: 17px; height: 18px; }
.b svg { width: 15px; height: 15px; }
.b.on { height: 17px; background: #fff; border: 1px solid; border-color: #999 #fff #fff #999; }
.b.up { height: 17px; border: 1px solid; border-color: #fff #999 #999 #fff; }
.c { width: 7px; height: 18px; }
.c svg { width: 5px; height: 3px; }
.sep { width: 1px; height: 13px; margin: 0 3px; background: #999; }
.sep.dot { background: repeating-linear-gradient(#888 0 1px, #eee 1px 2px); }
.field { height: 16px; background: #fff; border: 1px solid; border-color: #aaa #fff #fff #aaa; }
.drop { width: 14px; height: 14px; border: 1px solid; border-color: #fff #999 #999 #fff; }
.drop svg { width: 10px; height: 6px; }
.combo { appearance: none; height: 16px; padding: 1px 1px 0; border: 1px solid; border-color: #aaa #fff #fff #aaa; font: 10px/13px "Liberation Mono", monospace; color: #333; }
.off, .off .combo, .off .drop { color: #8a8a8a; opacity: 1; }
.off .drop svg { opacity: .55; }
.grp label { white-space: nowrap; }
.g-file { width: 286px; padding-left: 10px; }
.g-mode { width: 151px; padding-left: 12px; }
.g-cursor { width: 160px; }
.g-search { width: 306px; }
.g-search .field { width: 98px; margin-left: 3px; }
.g-zoom { width: 124px; }
.g-expand { width: 161px; }
.g-help { width: 124px; padding-left: 14px; }
.g-help .field { width: 61px; margin-right: 4px; }
.g-compile { width: 104px; margin-left: 381px; margin-right: 3px; }
.g-run { width: 374px; margin-right: 2px; }
.g-run .num { width: 49px; text-align: right; font: 10px/14px "Liberation Mono", monospace; color: #333; }
.spin { display: flex; flex-direction: column; }
.spin button { width: 11px; height: 8px; border: 1px solid; border-color: #fff #999 #999 #fff; }
.spin svg { width: 8px; height: 5px; }
.g-step { width: 148px; }
.g-layout { width: 173px; padding-left: 14px; padding-right: 7px; }
.g-layout .combo { width: 102px; }
.g-cols { width: 279px; padding-left: 14px; padding-right: 8px; }
.g-cols .combo { width: 178px; }
.g-marks { width: 127px; padding-left: 9px; }
.g-filter { width: 139px; margin-left: 94px; }
.b.t { font: 9px/14px "Liberation Serif", serif; color: #777; }
.b.t.all { font: 7px/14px "DejaVu Sans Condensed", sans-serif; color: #555; }

.panes { flex: 1; min-height: 0; display: flex; background: #cfcfcf; border-top: 1px solid #bbb; }
.pane { display: flex; flex-direction: column; min-width: 0; }
.sim { width: 195px; margin-left: 2px; }
.obj { width: 159px; margin-left: 7px; }
.wave { flex: 1; margin: 0 2px 0 8px; border-left: 2px solid #fff; padding-bottom: 3px; }
.head { display: flex; align-items: center; gap: 2px; height: 16px; flex: none; background: #efefef; }
.head h2 { padding: 0 3px 0 1px; white-space: nowrap; }
.ic { width: 13px; height: 12px; }
.head button { width: 10px; height: 11px; background: #fdfdfd; margin-left: 2px; }
.head button svg { width: 8px; height: 8px; }
.rule { flex: 1; height: 5px; border: 1px solid #777; border-width: 1px 0; }
.grip { width: 15px; height: 5px; background: repeating-linear-gradient(90deg, #888 0 1px, transparent 1px 3px); }
.list { flex: 1; min-height: 0; overflow: hidden; background: #fff; }
table { width: 100%; table-layout: fixed; border-collapse: collapse; }
th, td { padding: 0 0 0 1px; height: 13px; line-height: 13px; font-weight: 400; text-align: left; white-space: nowrap; overflow: hidden; }
th { height: 16px; background: #efefef; border-left: 1px solid #aaa; border-bottom: 1px solid #ccc; }
.k { width: 10px; padding: 0; border-left: 0; }
.du { width: 59px; }
.de { width: 13px; }
.dn { width: 8px; height: 6px; }
.n { display: flex; align-items: center; height: 13px; }
.n svg { width: 12px; height: 12px; }
.n span { margin-left: 4px; }
.tw { flex: none; width: 8px; height: 8px; border: 1px solid #999; background: #fff; color: #111; font-size: 9px; line-height: 6px; border-radius: 1px; }
.dash { width: 5px; border-top: 1px solid #999; }
.l0 { padding-left: 4px; }
.l1 { padding-left: 19px; }
.l1 .dash { width: 2px; }
.l1 span { margin-left: 5px; }
.leaf { padding-left: 23px; }
.elbow { flex: none; width: 8px; height: 13px; border-left: 1px solid #999; background: linear-gradient(#999, #999) 0 6px / 100% 1px no-repeat; }
.elbow.end { height: 7px; align-self: flex-start; }
.top { padding-left: 17px; }
.sel { background: #bccad9; }
.hs { display: flex; align-items: center; flex: none; height: 15px; background: #f4f4f4; }
.hs button { width: 13px; height: 13px; background: #f2f2f2; border: 1px solid; border-color: #fff #999 #999 #fff; }
.hs svg { width: 6px; height: 8px; }
.thumb { display: block; background: #f0f0f0; border: 1px solid; border-color: #fff #999 #999 #fff; }
.hs .thumb { height: 13px; }
.short { width: 70px; }
.mid { width: 91px; }
.track { flex: 1; }
.full { flex: 1; display: flex; justify-content: center; padding-left: 380px; }
.full em { width: 2px; height: 11px; background: #f0e080; }
.dim { color: #999; }
.tabs { display: flex; flex: none; height: 19px; padding-bottom: 2px; background: #c8c8c8; }
.tab { height: 17px; padding: 0 2px; gap: 2px; border: 1px solid #444; border-top-color: #666; background: #c4c4c4; margin-right: 1px; }
.tab svg { width: 13px; height: 13px; }
.tab b { margin-left: 2px; color: #aaa; font: 10px/12px "DejaVu Sans", sans-serif; }
.tab.cur { background: #f0f0f0; border-top-color: #f0f0f0; }
.arr { width: 9px; height: 15px; background: #eee; border: 1px solid; border-color: #fff #888 #888 #fff; }
.arr svg { width: 6px; height: 8px; }

.obj .list { background: #4f5b8c; color: #fff; }
.obj .sel { color: #111; }
.obj td:last-child { width: 36px; text-align: right; padding-right: 1px; }
.cols { display: flex; align-items: center; height: 16px; background: #efefef; color: #111; border-bottom: 1px solid #ccc; }
.nm { flex: 1; padding-left: 1px; border-left: 1px solid #aaa; }
.cols .now { display: flex; align-items: center; justify-content: space-between; width: 81px; height: 13px; border: 1px solid #999; background: #eaf2e6; font: 10px/12px "Liberation Mono", monospace; }
.now svg { width: 11px; height: 9px; }
.cols .now i { width: 7px; height: 7px; border-radius: 50%; background: #18a018; }
.more { width: 8px; height: 9px; margin-left: 3px; }
.o { padding-left: 17px; }
.o1 { padding-left: 5px; }
.o1 svg { margin-left: 4px; }
.o2 { padding-left: 23px; }
.o2 .elbow { width: 9px; }
.obj .hs { height: 16px; }

.wave .head { height: 15px; margin-bottom: 2px; background: #9fb6d3; }
.wave .rule { border-color: #2c4a74; background: #c4d4e6; }
.wave .grip { background: repeating-linear-gradient(90deg, #5a7294 0 1px, #c4d4e6 1px 3px); }
.wgrid { flex: 1; min-height: 0; display: grid; grid-template: 15px minmax(0, 1fr) 34px 15px / 213px 84px minmax(0, 1fr) 14px; gap: 2px; background: #f4f4f4; }
.g { background: #808080; }
.tool { display: flex; align-items: center; gap: 3px; padding-left: 8px; }
.cr { width: 5px; height: 3px; }
.msgs { padding-right: 5px; text-align: right; color: #fff; line-height: 15px; }
.blk { background: #000; min-width: 0; overflow: hidden; }
.plot { width: 100%; height: 100%; }
.gridl { stroke: #6c6c6c; fill: none; }
.sig path { fill: none; stroke: #18b018; vector-effect: non-scaling-stroke; }
.sig .bus { stroke: #78c890; }
.val { fill: #e8e8e8; }
.time { fill: none; stroke: #18c018; }
.time text { fill: #18d018; stroke: none; text-anchor: middle; }
.time .ct { fill: #d8b818; }
.names, .vals { background: #808080; color: #fff; padding-top: 2px; overflow: hidden; }
.names { margin-left: 7px; }
.names li { display: flex; align-items: center; height: 14px; padding-left: 18px; gap: 4px; white-space: nowrap; }
.names svg { width: 12px; height: 12px; }
.names .sel { padding-left: 6px; background: #fff; color: #111; }
.names .sub { padding-left: 23px; }
.names .sub svg { margin-left: -4px; }
.names .elbow { width: 9px; height: 14px; border-color: #ddd; background-image: linear-gradient(#ddd, #ddd); }
.names .elbow.end { height: 7px; }
.vals li { height: 14px; line-height: 14px; padding-left: 1px; }
.vals .sel { background: #fff; color: #111; }
.names .endline, .vals .endline { height: 1px; margin: 1px 4px 0 2px; padding: 0; background: #111; }
.vs { display: flex; flex-direction: column; background: #f0f0f0; }
.vs button { width: 13px; height: 13px; background: #f2f2f2; border: 1px solid; border-color: #fff #999 #999 #fff; }
.vs svg { width: 10px; height: 7px; }
.vs .thumb { margin: 41px 1px auto; height: 13px; background: #fff; border-color: #fff; }
.foot { display: flex; flex-direction: column; background: #808080; }
.foot .now { display: flex; align-items: center; height: 18px; padding: 0 8px 0 7px; color: #fff; }
.foot .now span, .foot .cur > span:last-child { margin-left: auto; }
.foot svg { width: 10px; height: 10px; }
.foot .cur { display: flex; align-items: center; flex: 1; padding-right: 8px; background: #fff; }
.tools { display: flex; align-items: center; align-self: stretch; width: 40px; padding-left: 9px; background: #808080; }
.dim:nth-last-child(4) { border-left: 7px solid #808080; }

.status { display: flex; flex: none; height: 19px; padding: 1px 2px 1px 2px; gap: 2px; background: #f0f0f0; border-top: 1px solid #ccc; line-height: 17px; white-space: nowrap; }
.status span { padding-left: 2px; border: 1px solid; border-color: #ccc #f0f0f0 #f0f0f0 #ccc; }
.status .s1 { width: 143px; padding-left: 5px; }
.s2 { width: 67px; }
.s3 { width: 165px; }
.s4 { flex: 1; }
.status svg { width: 10px; height: 10px; align-self: flex-end; }
```
